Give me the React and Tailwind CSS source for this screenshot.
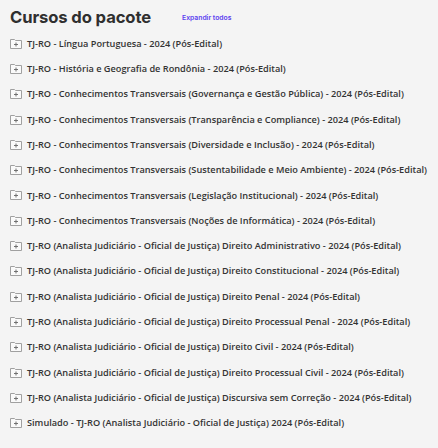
import React from 'react';

const courses = [
  'TJ-RO - Língua Portuguesa - 2024 (Pós-Edital)',
  'TJ-RO - História e Geografia de Rondônia - 2024 (Pós-Edital)',
  'TJ-RO - Conhecimentos Transversais (Governança e Gestão Pública) - 2024 (Pós-Edital)',
  'TJ-RO - Conhecimentos Transversais (Transparência e Compliance) - 2024 (Pós-Edital)',
  'TJ-RO - Conhecimentos Transversais (Diversidade e Inclusão) - 2024 (Pós-Edital)',
  'TJ-RO - Conhecimentos Transversais (Sustentabilidade e Meio Ambiente) - 2024 (Pós-Edital)',
  'TJ-RO - Conhecimentos Transversais (Legislação Institucional) - 2024 (Pós-Edital)',
  'TJ-RO - Conhecimentos Transversais (Noções de Informática) - 2024 (Pós-Edital)',
  'TJ-RO (Analista Judiciário - Oficial de Justiça) Direito Administrativo - 2024 (Pós-Edital)',
  'TJ-RO (Analista Judiciário - Oficial de Justiça) Direito Constitucional - 2024 (Pós-Edital)',
  'TJ-RO (Analista Judiciário - Oficial de Justiça) Direito Penal - 2024 (Pós-Edital)',
  'TJ-RO (Analista Judiciário - Oficial de Justiça) Direito Processual Penal - 2024 (Pós-Edital)',
  'TJ-RO (Analista Judiciário - Oficial de Justiça) Direito Civil - 2024 (Pós-Edital)',
  'TJ-RO (Analista Judiciário - Oficial de Justiça) Direito Processual Civil - 2024 (Pós-Edital)',
  'TJ-RO (Analista Judiciário - Oficial de Justiça) Discursiva sem Correção - 2024 (Pós-Edital)',
  'Simulado - TJ-RO (Analista Judiciário - Oficial de Justiça) 2024 (Pós-Edital)',
];

const FolderPlus = () => (
  <svg width="12" height="10" viewBox="0 0 12 10" className="shrink-0">
    <path d="M0.5 9.5V0.5H4.5L5.5 1.5H11.5V9.5Z" fill="#fafafa" stroke="#a0a0a0" strokeWidth="1" />
    <path d="M6 3.5V7.5M4 5.5H8" stroke="#707070" strokeWidth="1" />
  </svg>
);

export default function App() {
  return (
    <div className="w-[438px] h-[448px] bg-[#f4f4f4] overflow-hidden" style={{ fontFamily: '"Open Sans", sans-serif' }}>
      <div className="flex items-end pl-[10px] h-[31px]">
        <h2 className="mb-[3px] text-[16.6px] leading-[22px] font-bold text-[#2f2f2f] tracking-[-0.1px]" style={{ fontFamily: 'Inter, sans-serif' }}>
          Cursos do pacote
        </h2>
        <button className="ml-[31px] mb-[8px] text-[6.8px] font-semibold text-[#5a3ef0]" style={{ fontFamily: 'Inter, sans-serif' }}>Expandir todos</button>
      </div>
      <ul>
        {courses.map((c) => (
          <li key={c} className="flex items-center h-[25.3px] pl-[10px] gap-[5px]">
            <FolderPlus />
            <span className="text-[9.2px] font-semibold text-[#333] whitespace-nowrap">{c}</span>
          </li>
        ))}
      </ul>
    </div>
  );
}
